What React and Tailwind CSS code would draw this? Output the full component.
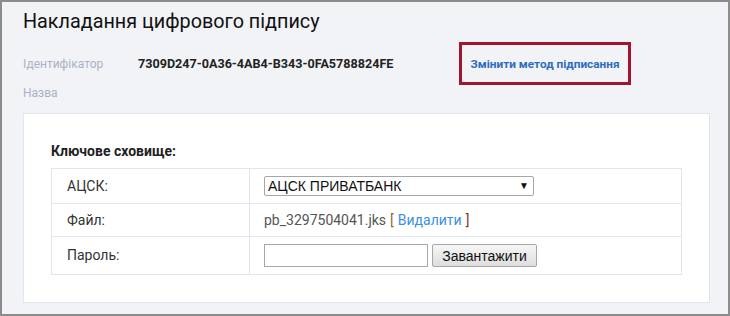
import React from "react";

export default function App() {
  return (
    <div
      className="w-[730px] h-[316px] border-2 border-[#8c8c8c] bg-[#f2f3f7] overflow-hidden pl-[21px] pt-[8px] font-['Roboto',sans-serif]"
    >
      <h1 className="text-[19.8px] leading-[24px] text-[#111] font-normal mb-[8px]">
        Накладання цифрового підпису
      </h1>
      <div className="flex items-center h-[43px]">
        <div className="w-[115px] flex-none text-[12px] leading-[14px] text-[#a8b2c6]">
          Ідентифікатор
        </div>
        <div className="w-[321px] flex-none text-[12.6px] leading-[16px] font-bold text-[#222]">
          7309D247-0A36-4AB4-B343-0FA5788824FE
        </div>
        <div className="w-[172px] h-[43px] flex-none border-[3px] border-[#a2152f] flex items-center justify-center">
          <span className="text-[11.8px] leading-[14px] font-bold text-[#2f6cbf]">
            Змінити метод підписання
          </span>
        </div>
      </div>
      <div className="mt-[1px] text-[12px] leading-[14px] text-[#a8b2c6]">Назва</div>

      <div className="mt-[13px] w-[687px] bg-white border border-[#e0e5ef] px-[27px] pt-[28px] pb-[27px]">
        <div className="text-[14px] leading-[18px] font-bold text-[#222] mb-[8px]">
          Ключове сховище:
        </div>
        <div className="border border-[#dfe5ef] text-[14px] text-[#333]">
          <div className="flex h-[35px] border-b border-[#dfe5ef]">
            <div className="w-[198px] flex-none border-r border-[#dfe5ef] pl-[15px] flex items-center">
              АЦСК:
            </div>
            <div className="pl-[14px] flex items-center">
              <div className="w-[270px] h-[20px] border border-[#a6a6a6] rounded-[2px] bg-white flex items-center justify-between pl-[3px] pr-[4px] font-['Liberation_Sans',Arial,sans-serif] text-[14px] text-[#111]">
                <span>АЦСК ПРИВАТБАНК</span>
                <span className="text-[10px] leading-none">▼</span>
              </div>
            </div>
          </div>
          <div className="flex h-[33px] border-b border-[#dfe5ef]">
            <div className="w-[198px] flex-none border-r border-[#dfe5ef] pl-[15px] flex items-center">
              Файл:
            </div>
            <div className="pl-[14px] flex items-center text-[#555]">
              <span>pb_3297504041.jks</span>
              <span className="ml-[4px] text-[#8a6a3a]">[</span>
              <span className="ml-[4px] text-[#3d8fe0]">Видалити</span>
              <span className="ml-[4px] text-[#7a3a2a]">]</span>
            </div>
          </div>
          <div className="flex h-[37px]">
            <div className="w-[198px] flex-none border-r border-[#dfe5ef] pl-[15px] flex items-center">
              Пароль:
            </div>
            <div className="pl-[14px] flex items-center gap-[4px]">
              <input
                type="password"
                className="w-[164px] h-[23px] border border-[#a6a6a6] bg-white outline-none"
              />
              <button className="w-[105px] h-[23px] border border-[#a6a6a6] rounded-[2px] bg-gradient-to-b from-[#f6f6f6] to-[#dedede] text-[14px] text-[#111] font-['Liberation_Sans',Arial,sans-serif] leading-[20px]">
                Завантажити
              </button>
            </div>
          </div>
        </div>
      </div>
    </div>
  );
}
